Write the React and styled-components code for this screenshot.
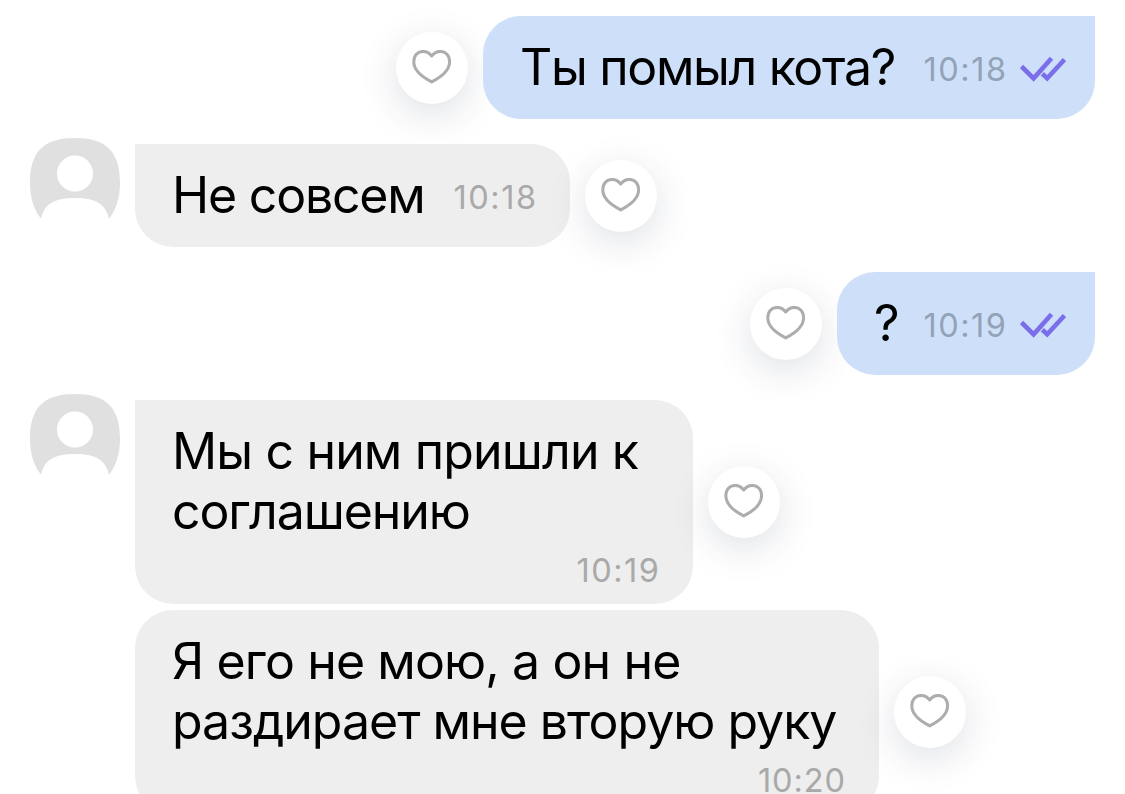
import React from 'react'
import styled, { createGlobalStyle } from 'styled-components';

const GlobalStyle = createGlobalStyle`
  * {
    box-sizing: border-box;
  }

  body {
    margin: 0;
    background: #fff;
    font-family: Inter, 'Noto Sans', sans-serif;
    overflow: hidden;
  }
`

const messages = [
  { lines: [{ text: 'Ты помыл кота?', spacing: -1.33 }], time: '10:18', mine: true, first: true, width: 612, gap: 25 },
  { lines: [{ text: 'Не совсем', spacing: -1.2 }], time: '10:18', first: true, width: 435, gap: 25 },
  { lines: [{ text: '?', spacing: 0 }], time: '10:19', mine: true, first: true, width: 258, gap: 25 },
  {
    lines: [{ text: 'Мы с ним пришли к', spacing: -0.85 }, { text: 'соглашению', spacing: -1.1 }],
    time: '10:19', first: true, width: 558, gap: 6,
  },
  {
    lines: [{ text: 'Я его не мою, а он не', spacing: -0.87 }, { text: 'раздирает мне вторую руку', spacing: -1 }],
    time: '10:20', timeSpacing: 0.9, width: 744, gap: 0,
  },
];

const Heart = () => (
  <HeartIcon viewBox="0 0 40 34">
    <path d="M19.7 6C17.2 2.8 14.6 1.4 11.2 1.4C5.6 1.4 1.8 5.8 1.8 11.8C1.8 20 8.4 26.2 19.7 31.9C31 26.2 37.6 20 37.6 11.8C37.6 5.8 33.8 1.4 28.2 1.4C24.8 1.4 22.2 2.8 19.7 6Z" />
  </HeartIcon>
)

const Checks = () => (
  <ChecksIcon viewBox="0 0 46 26">
    <path d="M1.5 10.5L13.6 22.3L31.5 2.2M22.3 17.8L27.2 22.3L44.5 3.5" />
  </ChecksIcon>
)

const Avatar = () => (
  <AvatarIcon viewBox="0 0 90 90">
    <path
      fillRule="evenodd"
      d="M45 0C75 0 90 12 90 45C90 60 86 72 79 80.7C76 67 67 60 45 60C23 60 14 67 11 80.7C4 72 0 60 0 45C0 12 15 0 45 0ZM45 17.5A18 18 0 1 0 45 53.5A18 18 0 1 0 45 17.5Z"
    />
  </AvatarIcon>
)

const Message = ({ lines, time, timeSpacing = 1.5, mine, first, width, gap }) => {
  const multiline = lines.length > 1;
  return(
    <Row $mine={mine} $gap={gap}>
      {!mine && <AvatarSlot>{first && <Avatar />}</AvatarSlot>}
      <Bubble $mine={mine} $first={first} $width={width} $multiline={multiline}>
        <Text>
          {lines.map((line) => (
            <Line key={line.text} $spacing={line.spacing}>{line.text}</Line>
          ))}
        </Text>
        <Meta $mine={mine} $multiline={multiline}>
          <Time $spacing={timeSpacing}>{time}</Time>
          {mine && <Checks />}
        </Meta>
      </Bubble>
      <LikeButton $multiline={multiline} aria-label="Нравится">
        <Heart />
      </LikeButton>
    </Row>
  )
}

const App = () =>{
  return(
    <Chat>
      <GlobalStyle />
      {
        messages.map((message, index) =>{
          return(
            <Message key={index} {...message} />
          )
        })
      }
    </Chat>
  )
}

const Chat = styled.main`
  display: flex;
  flex-direction: column;
  width: 1125px;
  height: 794px;
  padding: 16px 30px 0;
  overflow: hidden;
`

const Row = styled.div`
  display: flex;
  flex-direction: ${({ $mine }) => ($mine ? 'row-reverse' : 'row')};
  flex-shrink: 0;
  align-items: center;
  gap: 15px;
  margin-bottom: ${({ $gap }) => $gap}px;
`

const AvatarSlot = styled.div`
  width: 90px;
  align-self: flex-start;
  margin-top: -6px;
`

const AvatarIcon = styled.svg`
  display: block;
  width: 90px;
  height: 90px;
  fill: #e0e0e0;
`

const Bubble = styled.div`
  display: flex;
  flex-direction: ${({ $multiline }) => ($multiline ? 'column' : 'row')};
  justify-content: space-between;
  width: ${({ $width }) => $width}px;
  height: ${({ $multiline }) => ($multiline ? 204 : 103)}px;
  padding: 21px 0 0 37px;
  border-radius: 38px;
  border-top-left-radius: ${({ $mine, $first }) => ($first && !$mine ? 0 : 38)}px;
  border-top-right-radius: ${({ $mine, $first }) => ($first && $mine ? 0 : 38)}px;
  background: ${({ $mine }) => ($mine ? '#cee0f9' : '#eeeeee')};
`

const Text = styled.div`
  color: #000;
  font-size: 50px;
  line-height: 60px;
  white-space: nowrap;
`

const Line = styled.div`
  letter-spacing: ${({ $spacing }) => $spacing}px;
`

const Meta = styled.div`
  display: flex;
  align-items: center;
  align-self: ${({ $multiline }) => ($multiline ? 'flex-end' : 'flex-start')};
  gap: 14px;
  height: 40px;
  margin-top: ${({ $multiline }) => ($multiline ? 0 : 12)}px;
  margin-bottom: ${({ $multiline }) => ($multiline ? 14 : 0)}px;
  padding-right: ${({ $mine }) => ($mine ? 29 : 34)}px;
  color: ${({ $mine }) => ($mine ? '#93a2b6' : '#a9a9a9')};
`

const Time = styled.span`
  margin-right: ${({ $spacing }) => -$spacing}px;
  padding-top: 2px;
  font-size: 32.5px;
  line-height: 40px;
  letter-spacing: ${({ $spacing }) => $spacing}px;
`

const ChecksIcon = styled.svg`
  width: 46px;
  height: 26px;
  fill: none;
  stroke: #7a6eea;
  stroke-width: 4.6;
`

const LikeButton = styled.button`
  display: flex;
  flex-shrink: 0;
  align-items: flex-start;
  justify-content: center;
  width: 72px;
  height: 72px;
  margin-top: ${({ $multiline }) => ($multiline ? 0 : 1)}px;
  padding: 18px 0 0;
  border: 0;
  border-radius: 50%;
  background: #fff;
  box-shadow: 0 10px 38px rgba(35, 50, 80, 0.15);
`

const HeartIcon = styled.svg`
  width: 40px;
  height: 34px;
  fill: none;
  stroke: #adadad;
  stroke-width: 3;
  stroke-linejoin: round;
`

export default App;
